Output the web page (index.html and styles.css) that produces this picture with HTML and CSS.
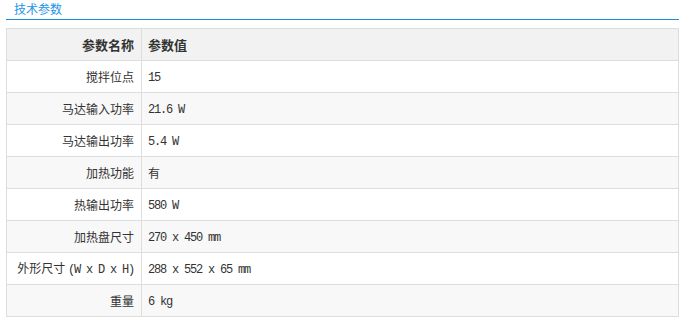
FILE: index.html
```html
<!DOCTYPE html>
<html lang="zh">
<head>
<meta charset="utf-8">
<link rel="stylesheet" href="styles.css">
</head>
<body>
<div class="wrap">
  <div class="title"><span class="title-text">技术参数</span></div>
  <table class="spec">
    <thead>
      <tr><th class="k">参数名称</th><th class="v">参数值</th></tr>
    </thead>
    <tbody>
      <tr><td class="k">搅拌位点</td><td class="v"><span class="mono">15</span></td></tr>
      <tr class="alt"><td class="k">马达输入功率</td><td class="v"><span class="mono">21.6 W</span></td></tr>
      <tr><td class="k">马达输出功率</td><td class="v"><span class="mono">5.4 W</span></td></tr>
      <tr class="alt"><td class="k">加热功能</td><td class="v">有</td></tr>
      <tr><td class="k">热输出功率</td><td class="v"><span class="mono">580 W</span></td></tr>
      <tr class="alt"><td class="k">加热盘尺寸</td><td class="v"><span class="mono">270 x 450 mm</span></td></tr>
      <tr><td class="k">外形尺寸 <span class="mono">(W x D x H)</span></td><td class="v"><span class="mono">288 x 552 x 65 mm</span></td></tr>
      <tr class="alt"><td class="k">重量</td><td class="v"><span class="mono">6 kg</span></td></tr>
    </tbody>
  </table>
</div>
</body>
</html>
```

FILE: styles.css
```css
html, body {
  margin: 0;
  padding: 0;
  background: #fff;
}
body {
  font-family: "Noto Sans CJK SC", "Liberation Sans", sans-serif;
  font-size: 12px;
  color: #333;
}
.wrap {
  width: 673px;
  margin-left: 6px;
}
.title {
  border-bottom: 1px solid #1c8fe3;
  padding-left: 8px;
  box-sizing: border-box;
  height: 20px;
}
.title-text {
  display: block;
  font-size: 12px;
  line-height: 18px;
  color: #1b95e8;
}
.spec {
  margin-top: 8px;
  width: 673px;
  border-collapse: collapse;
  table-layout: fixed;
}
.spec th, .spec td {
  border: 1px solid #dddddd;
  height: 32px;
  padding: 0 7px 0 6px;
  box-sizing: border-box;
  vertical-align: middle;
  line-height: 16px;
}
.spec .k {
  width: 135px;
  text-align: right;
}
.spec .v {
  text-align: left;
}
.spec thead th {
  background: #f2f2f2;
  font-weight: bold;
  font-size: 13px;
  color: #333;
}
.spec tr.alt td {
  background: #f8f8f8;
}
.mono {
  font-family: "Liberation Mono", "DejaVu Sans Mono", monospace;
  font-size: 12px;
  letter-spacing: -1.2px;
  color: #333;
}
```
